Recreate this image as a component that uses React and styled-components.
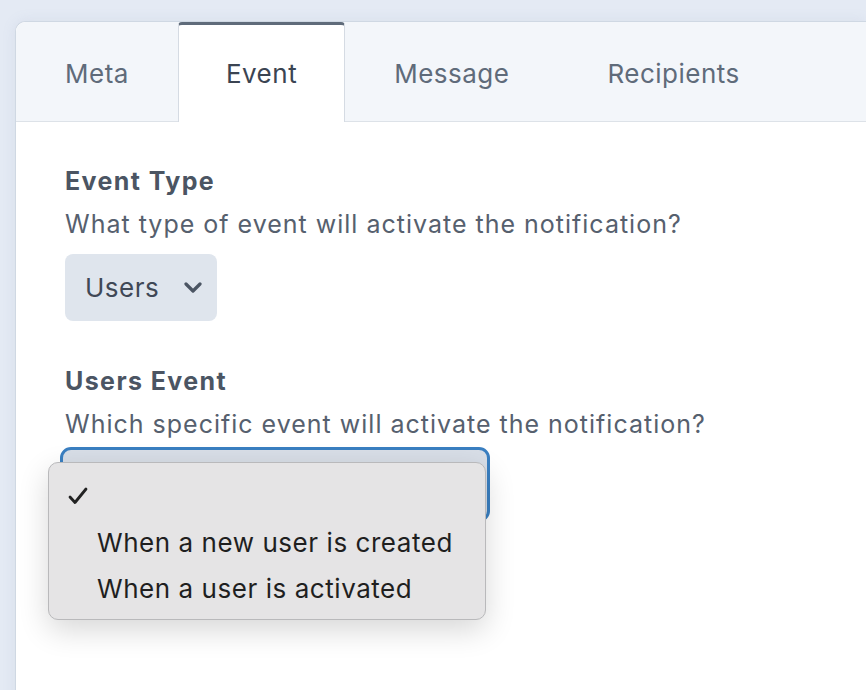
import React from "react";
import styled, { createGlobalStyle } from "styled-components";

const GlobalStyle = createGlobalStyle`
  html, body {
    margin: 0;
    padding: 0;
    background: #e4eaf4;
    font-family: Inter, "Noto Sans", sans-serif;
  }
`;

const Page = styled.div`
  height: 690px;
  overflow: hidden;
  padding: 21px 0 0 15px;
  box-sizing: border-box;
`;

const Panel = styled.div`
  background: #fff;
  border: 1px solid #cfd8e3;
  border-right: none;
  border-radius: 10px 0 0 0;
  min-height: 720px;
  box-shadow: 0 0 14px rgba(120, 140, 170, 0.12);
`;

const TabBar = styled.div`
  display: flex;
  height: 99px;
  background: #f3f6fa;
  border-bottom: 1px solid #dde2e8;
  border-radius: 10px 0 0 0;
`;

const Tab = styled.div`
  display: flex;
  align-items: center;
  padding: 0 ${(p) => (p.$active ? 47 : 48)}px;
  font-size: 26px;
  letter-spacing: 0.5px;
  color: ${(p) => (p.$active ? "#3b4452" : "#5f6b7a")};
  background: ${(p) => (p.$active ? "#fff" : "transparent")};
  border-top: 3px solid ${(p) => (p.$active ? "#5f6b7a" : "transparent")};
  border-left: 1px solid ${(p) => (p.$active ? "#d5dbe3" : "transparent")};
  border-right: 1px solid ${(p) => (p.$active ? "#d5dbe3" : "transparent")};
  border-radius: 4px 4px 0 0;
  margin-bottom: -1px;
  box-sizing: border-box;
`;

const Content = styled.div`
  padding: 44px 49px;
`;

const Field = styled.div`
  margin-bottom: 45px;
`;

const Label = styled.div`
  font-size: 25px;
  line-height: 30px;
  letter-spacing: 1.4px;
  font-weight: 700;
  color: #4b5563;
  margin-bottom: 13px;
`;

const Help = styled.div`
  font-size: 25px;
  line-height: 30px;
  letter-spacing: 1px;
  color: #56606e;
  margin-bottom: ${(p) => (p.$tight ? 8 : 15)}px;
`;

const Select = styled.div`
  display: inline-flex;
  align-items: center;
  gap: 24px;
  height: 67px;
  padding: 0 14px 0 20px;
  box-sizing: border-box;
  border-radius: 8px;
  background: #dfe5ed;
  font-size: 26px;
  letter-spacing: 0.5px;
  color: #3f4856;
`;

const FocusWrap = styled.div`
  position: relative;
  margin-left: -5px;
`;

const FocusSelect = styled.div`
  width: 430px;
  height: 75px;
  box-sizing: border-box;
  border: 3px solid #3a7fc1;
  border-radius: 11px;
  background: #d8dee7;
`;

const Menu = styled.div`
  position: absolute;
  left: -12px;
  top: 15px;
  width: 438px;
  box-sizing: border-box;
  padding: 10px 0 8px;
  background: #e5e4e5;
  border: 1px solid #b9b9bb;
  border-radius: 10px;
  box-shadow: 0 10px 30px rgba(0, 0, 0, 0.16);
`;

const Item = styled.div`
  display: flex;
  align-items: center;
  height: 46px;
  padding-left: 19px;
  font-size: 26px;
  letter-spacing: 0.55px;
  color: #1f1f1f;
`;

const Check = styled.span`
  display: inline-flex;
  width: 29px;
`;

function Chevron() {
  return (
    <svg width="20" height="12" viewBox="0 0 20 12">
      <path d="M3 2 L10 9 L17 2" fill="none" stroke="#4b5563" strokeWidth="3.2" strokeLinecap="round" strokeLinejoin="round" />
    </svg>
  );
}

function CheckMark() {
  return (
    <svg width="20" height="18" viewBox="0 0 20 18">
      <path d="M2 10 L7 15.5 L18 2" fill="none" stroke="#222" strokeWidth="2.8" strokeLinecap="round" strokeLinejoin="round" />
    </svg>
  );
}

const tabs = ["Meta", "Event", "Message", "Recipients"];

export default function App() {
  return (
    <>
      <GlobalStyle />
      <Page>
        <Panel>
          <TabBar>
            {tabs.map((t) => (
              <Tab key={t} $active={t === "Event"}>
                {t}
              </Tab>
            ))}
          </TabBar>
          <Content>
            <Field>
              <Label>Event Type</Label>
              <Help>What type of event will activate the notification?</Help>
              <Select>
                Users
                <Chevron />
              </Select>
            </Field>
            <Field>
              <Label>Users Event</Label>
              <Help $tight>Which specific event will activate the notification?</Help>
              <FocusWrap>
                <FocusSelect />
                <Menu>
                  <Item>
                    <Check>
                      <CheckMark />
                    </Check>
                  </Item>
                  <Item>
                    <Check />
                    When a new user is created
                  </Item>
                  <Item>
                    <Check />
                    When a user is activated
                  </Item>
                </Menu>
              </FocusWrap>
            </Field>
          </Content>
        </Panel>
      </Page>
    </>
  );
}
